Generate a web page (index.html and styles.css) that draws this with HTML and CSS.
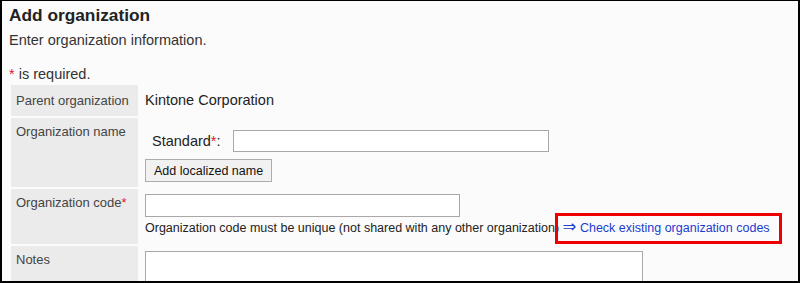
FILE: index.html
```html
<!DOCTYPE html>
<html lang="en">
<head>
<meta charset="utf-8">
<title>Add organization</title>
<link rel="stylesheet" href="styles.css">
</head>
<body>
<div class="frame">
  <h1 class="title">Add organization</h1>
  <p class="desc">Enter organization information.</p>
  <p class="required"><span class="req">*</span> is required.</p>
  <table class="form">
    <tr>
      <th class="th-mid">Parent organization</th>
      <td class="val-line">Kintone Corporation</td>
    </tr>
    <tr>
      <th>Organization name</th>
      <td class="td-name">
        <div class="name-row">
          <span class="name-label">Standard<span class="req">*</span>:</span>
          <input class="input input-name" type="text">
        </div>
        <button class="btn" type="button">Add localized name</button>
      </td>
    </tr>
    <tr>
      <th>Organization code<span class="req">*</span></th>
      <td class="td-code">
        <input class="input input-code" type="text">
        <div class="note">Organization code must be unique (not shared with any other organization) <a class="callout" href="#"><span class="arrow">⇒</span> Check existing organization codes</a></div>
      </td>
    </tr>
    <tr>
      <th>Notes</th>
      <td><textarea class="notes"></textarea></td>
    </tr>
  </table>
</div>
</body>
</html>
```
FILE: styles.css
```css
html, body {
  margin: 0;
  padding: 0;
}

body {
  font-family: "Liberation Sans", Arial, sans-serif;
  color: #333;
}

.frame {
  box-sizing: border-box;
  width: 800px;
  height: 283px;
  border: 2px solid #000;
  border-top-width: 1px;
  background: #fbfbfb;
  padding: 4px 0 0 7px;
  overflow: hidden;
}

.title {
  margin: 0;
  font-size: 17.3px;
  line-height: 20px;
  font-weight: bold;
  color: #222;
}

.desc {
  margin: 7px 0 0;
  font-size: 14.5px;
  line-height: 17px;
}

.required {
  margin: 17px 0 0;
  font-size: 14.5px;
  line-height: 17px;
}

.req {
  color: #e0201c;
}

.form {
  border-collapse: separate;
  border-spacing: 2px;
  margin: 0;
}

.form th {
  width: 117px;
  padding: 6px 5px 6px 5px;
  background: #ebebeb;
  color: #444;
  font-size: 13px;
  line-height: 15px;
  font-weight: normal;
  text-align: left;
  vertical-align: top;
  white-space: nowrap;
}

.form th.th-mid {
  vertical-align: middle;
}

.form td {
  padding: 4px 5px;
  vertical-align: top;
  font-size: 14.5px;
  color: #222;
}

.form td.td-name {
  padding-bottom: 5px;
}

.form td.td-code {
  padding-top: 5px;
}

.val-line {
  line-height: 23px;
}

.name-row {
  display: flex;
  align-items: center;
  margin-top: 8px;
  padding-left: 7px;
  line-height: 17px;
}

.input {
  box-sizing: border-box;
  border: 1px solid #a8a8a8;
  background: #fff;
  padding: 0 3px;
  margin: 0;
  font-family: inherit;
}

.input-name {
  width: 316px;
  height: 22px;
  margin-left: 12px;
}

.input-code {
  display: block;
  width: 315px;
  height: 23px;
}

.btn {
  display: block;
  box-sizing: border-box;
  height: 23px;
  margin-top: 7px;
  padding: 0 8px;
  font-family: inherit;
  font-size: 12.5px;
  color: #111;
  background: #f1f1f1;
  border: 1px solid #adadad;
  border-radius: 0;
}

.note {
  padding: 2px 0 3px;
  font-size: 12.5px;
  line-height: 18px;
  color: #222;
  white-space: nowrap;
}

.callout {
  position: relative;
  color: #1b3ccf;
  text-decoration: none;
}

.arrow {
  font-family: "DejaVu Sans", sans-serif;
  font-size: 16.5px;
  line-height: 1px;
}

.callout::after {
  content: "";
  position: absolute;
  left: -8px;
  right: -12px;
  top: -8px;
  bottom: -9px;
  border: 3px solid #ee0000;
}

.notes {
  display: block;
  box-sizing: border-box;
  width: 498px;
  height: 60px;
  margin: 1px 0 0;
  border: 1px solid #a8a8a8;
  background: #fff;
  resize: none;
}
```
